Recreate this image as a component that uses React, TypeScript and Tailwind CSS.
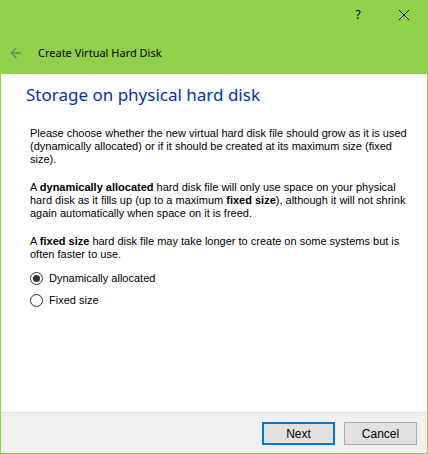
import { ArrowLeft } from "lucide-react";

const body = { fontFamily: '"Liberation Sans", Arial, sans-serif' };
const ui = { fontFamily: '"Noto Sans", "Open Sans", sans-serif' };

function Radio({ label, checked }: { label: string; checked?: boolean }) {
  return (
    <label className="flex items-center gap-[6px] text-[11px] leading-[13px] text-black" style={body}>
      <span className="flex h-[13px] w-[13px] items-center justify-center rounded-full border border-[#333] bg-white">
        {checked && <span className="h-[7px] w-[7px] rounded-full bg-[#333]" />}
      </span>
      {label}
    </label>
  );
}

export default function App() {
  return (
    <div className="flex h-[454px] w-[428px] flex-col border-x border-b border-[#8fd24a] bg-white">
      {/* Title bar with back arrow */}
      <div className="flex h-[74px] flex-col bg-[#8fd24a]">
        <div className="flex h-[30px] items-center justify-end">
          <span className="w-[46px] pb-[1px] text-center text-[12px] text-black" style={ui}>?</span>
          <span className="flex w-[46px] items-center justify-center">
            <svg width="12" height="12" viewBox="0 0 12 12" stroke="#111" strokeWidth="1">
              <path d="M1 1 L11 11 M11 1 L1 11" />
            </svg>
          </span>
        </div>
        <div className="flex flex-1 items-center gap-[14px] pl-[7px] pt-[2px]">
          <ArrowLeft className="h-[16px] w-[16px] text-[#73845f]" strokeWidth={2.25} />
          <span className="text-[11px] text-black" style={ui}>Create Virtual Hard Disk</span>
        </div>
      </div>

      <div className="flex flex-1 flex-col px-[29px] pt-[8px]">
        <h1 className="-ml-[4px] text-[17px] leading-[26px] text-[#0033aa]" style={ui}>
          Storage on physical hard disk
        </h1>
        <div className="mt-[19px] flex flex-col gap-[15px] whitespace-nowrap text-[11px] leading-[13px] text-black" style={body}>
          <p>
            Please choose whether the new virtual hard disk file should grow as it is used
            <br />
            (dynamically allocated) or if it should be created at its maximum size (fixed
            <br />
            size).
          </p>
          <p>
            A <b>dynamically allocated</b> hard disk file will only use space on your physical
            <br />
            hard disk as it fills up (up to a maximum <b>fixed size</b>), although it will not shrink
            <br />
            again automatically when space on it is freed.
          </p>
          <p>
            A <b>fixed size</b> hard disk file may take longer to create on some systems but is
            <br />
            often faster to use.
          </p>
        </div>
        <div className="mt-[11px] flex flex-col gap-[9px]">
          <Radio label="Dynamically allocated" checked />
          <Radio label="Fixed size" />
        </div>
      </div>

      <div className="flex h-[41px] items-start justify-end gap-[9px] border-t border-[#dfdfdf] bg-[#f0f0f0] pr-[10px] pt-[9px]">
        <button className="h-[23px] w-[73px] border-2 border-[#0078d7] bg-[#e1e1e1] text-[12px] text-black" style={body}>
          Next
        </button>
        <button className="h-[23px] w-[73px] border border-[#adadad] bg-[#e1e1e1] text-[12px] text-black" style={body}>
          Cancel
        </button>
      </div>
    </div>
  );
}
